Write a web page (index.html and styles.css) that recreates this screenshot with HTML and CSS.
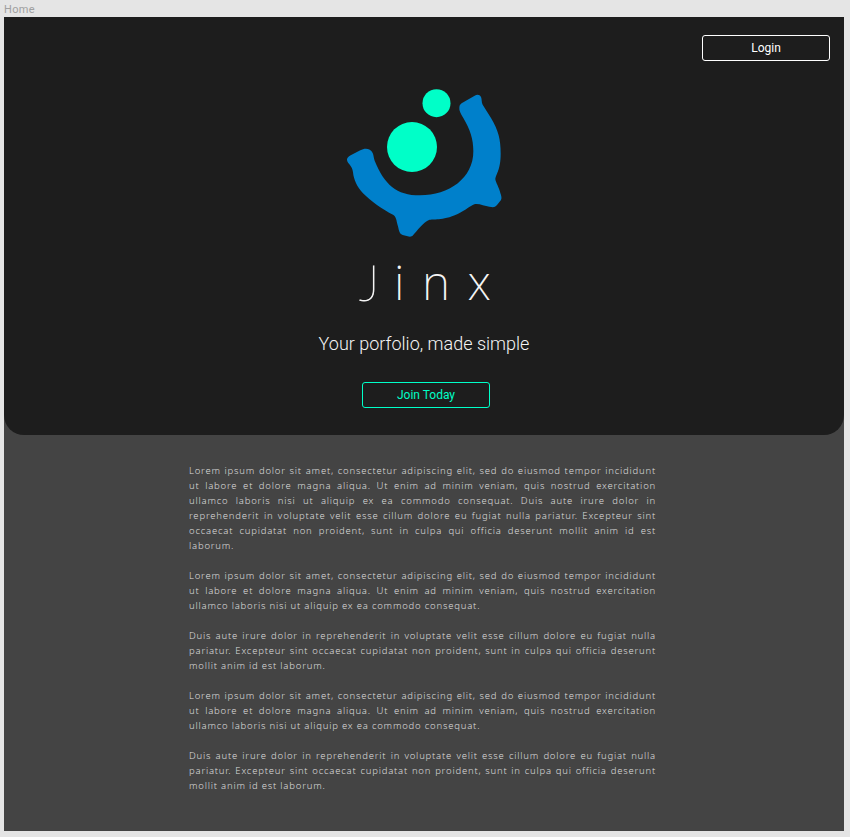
FILE: index.html
```html
<!DOCTYPE html>
<html lang="en">
<head>
<meta charset="utf-8">
<title>Jinx</title>
<link rel="stylesheet" href="styles.css">
</head>
<body>
<div class="frame-label">Home</div>
<main class="page">
  <header class="hero">
    <button class="button login">Login</button>
    <svg class="logo" viewBox="0 0 570 510" aria-hidden="true">
      <path fill="#0080cb" d="M51 240C50 235 55 230 62 226L91 211C105 203 121 205 128 219C131 225 131 235 134 242C163 313 199 346 270 346C357 346 430 295 430 214C430 176 420 148 400 114C392 101 387 91 388 83C388 75 392 71 400 67L434 47C441 43 449 43 453 51C456 57 454 67 458 74L483 114C505 151 512 178 512 221C512 270 498 281 496 298C497 307 507 322 511 339C514 348 516 355 513 360L501 375C494 383 489 382 478 380C463 378 445 369 433 373C420 378 407 391 383 402C335 424 309 416 297 420C282 424 260 454 249 466C245 471 239 471 233 469L218 465C206 461 207 448 203 436C199 421 199 410 189 404C159 390 121 362 99 340C81 321 71 298 69 277C67 256 53 252 51 240Z"/>
      <circle cx="246" cy="201" r="75" fill="#00ffc8"/>
      <circle cx="319.500" cy="69.500" r="42" fill="#00ffc8"/>
    </svg>
    <h1 class="brand"><span class="initial">J</span>inx</h1>
    <p class="tagline">Your porfolio, made simple</p>
    <button class="button join">Join Today</button>
  </header>
  <section class="copy">
    <p>Lorem ipsum dolor sit amet, consectetur adipiscing elit, sed do eiusmod tempor incididunt ut labore et dolore magna aliqua. Ut enim ad minim veniam, quis nostrud exercitation ullamco laboris nisi ut aliquip ex ea commodo consequat. Duis aute irure dolor in reprehenderit in voluptate velit esse cillum dolore eu fugiat nulla pariatur. Excepteur sint occaecat cupidatat non proident, sunt in culpa qui officia deserunt mollit anim id est laborum.</p>
    <p>Lorem ipsum dolor sit amet, consectetur adipiscing elit, sed do eiusmod tempor incididunt ut labore et dolore magna aliqua. Ut enim ad minim veniam, quis nostrud exercitation ullamco laboris nisi ut aliquip ex ea commodo consequat.</p>
    <p>Duis aute irure dolor in reprehenderit in voluptate velit esse cillum dolore eu fugiat nulla pariatur. Excepteur sint occaecat cupidatat non proident, sunt in culpa qui officia deserunt mollit anim id est laborum.</p>
    <p>Lorem ipsum dolor sit amet, consectetur adipiscing elit, sed do eiusmod tempor incididunt ut labore et dolore magna aliqua. Ut enim ad minim veniam, quis nostrud exercitation ullamco laboris nisi ut aliquip ex ea commodo consequat.</p>
    <p>Duis aute irure dolor in reprehenderit in voluptate velit esse cillum dolore eu fugiat nulla pariatur. Excepteur sint occaecat cupidatat non proident, sunt in culpa qui officia deserunt mollit anim id est laborum.</p>
  </section>
</main>
</body>
</html>
```
FILE: styles.css
```css
* { box-sizing: border-box; }
body {
  margin: 0;
  height: 837px;
  overflow: hidden;
  padding: 0 6px 6px 4px;
  background: #e5e5e5;
  font-family: Roboto, sans-serif;
}
.frame-label {
  height: 17px;
  color: #a0a0a0;
  font: 11px/19px Roboto, sans-serif;
  letter-spacing: 0.3px;
}
.page {
  height: 814px;
  background: #444;
}
.hero {
  height: 417.5px;
  padding: 18px 14px 0;
  display: flex;
  flex-direction: column;
  align-items: center;
  background: #1d1d1d;
  border-radius: 0 0 20px 20px;
}
.button {
  width: 128px;
  height: 26px;
  flex: none;
  padding: 0;
  background: transparent;
  border: 1px solid currentColor;
  border-radius: 3px;
  font: 12px/24px Roboto, sans-serif;
}
.login {
  align-self: flex-end;
  color: #fff;
}
.logo {
  width: 190px;
  height: 170px;
  flex: none;
  margin: 19px 0 0 2px;
}
.brand {
  display: flex;
  width: 150px;
  height: 68px;
  margin: -2px 0 0 20px;
  color: #f4f4f4;
  font: 200 48px/68px "Noto Sans", sans-serif;
  letter-spacing: 17.6px;
}
.initial {
  width: 35px;
  flex: none;
  font-family: Lato, sans-serif;
  font-size: 50px;
  font-weight: 100;
  -webkit-text-stroke: 0.8px currentColor;
}
.tagline {
  margin: 16px 0 0;
  color: #f4f4f4;
  font: 300 18px/24px Roboto, sans-serif;
}
.join {
  margin: 25.5px 0 0 4px;
  color: #00ffc8;
}
.copy {
  width: 467px;
  margin: 28.5px 0 0 185px;
  color: #dedede;
  font: 300 9.5px/15px "Noto Sans", sans-serif;
  letter-spacing: 0.8px;
  text-align: justify;
}
.copy p { margin: 0 0 15px; }
```
